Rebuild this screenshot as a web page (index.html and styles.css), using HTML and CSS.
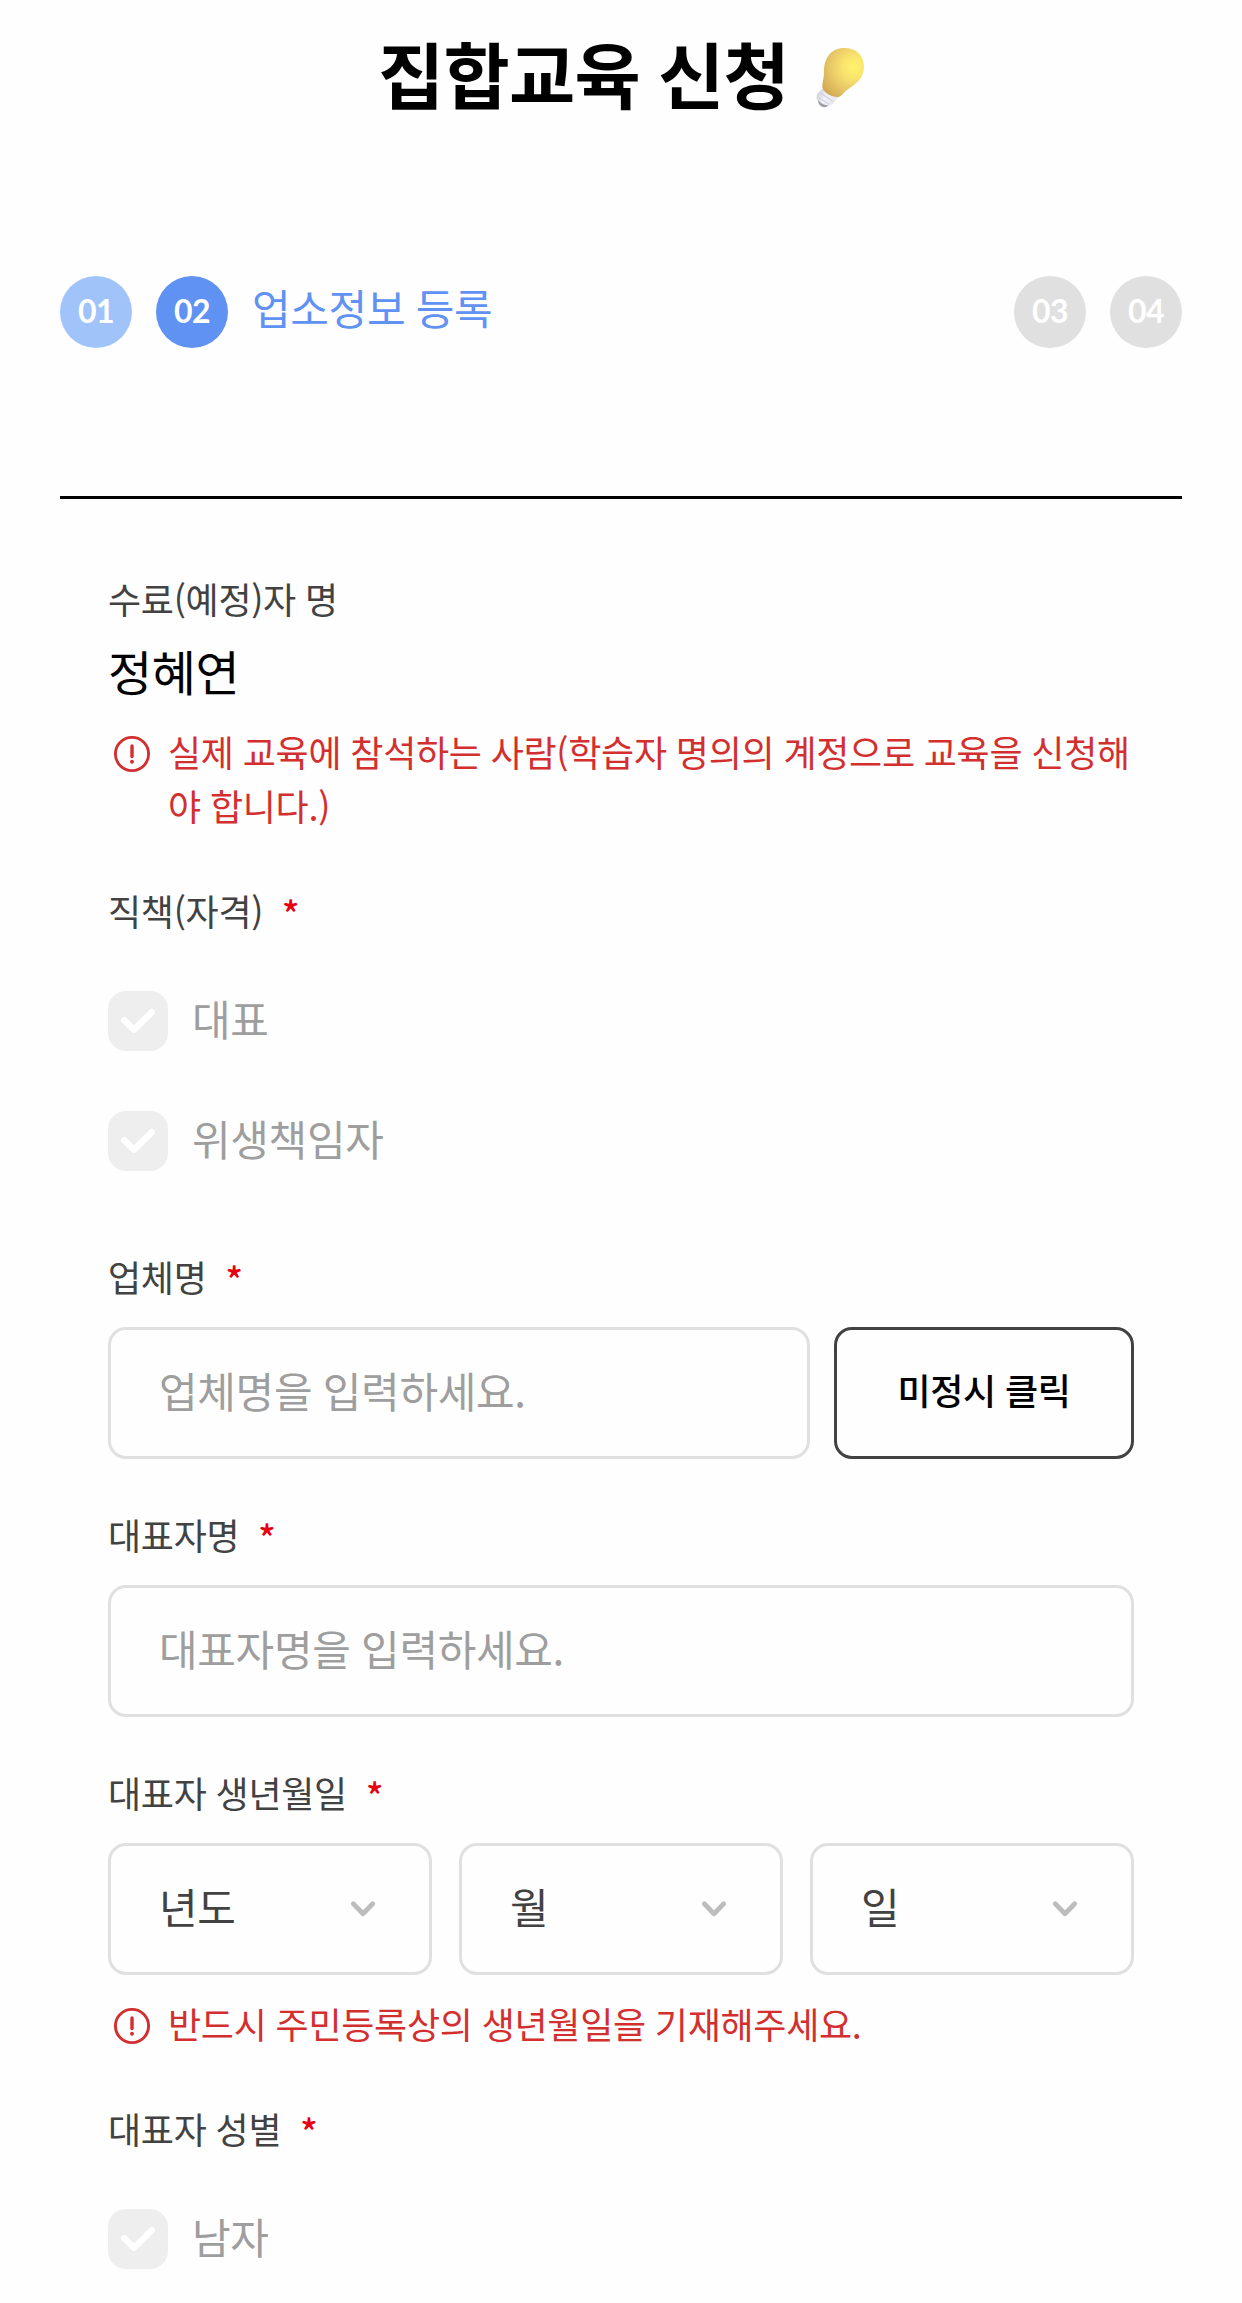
FILE: index.html
```html
<!DOCTYPE html>
<html lang="ko">
<head>
<meta charset="utf-8">
<title>집합교육 신청</title>
<link rel="stylesheet" href="styles.css">
</head>
<body>
<svg class="defs" aria-hidden="true">
  <symbol id="check" viewBox="0 0 60 60"><path d="M16.2 29.2 26 38.8 43.8 21.2" fill="none" stroke="#fff" stroke-width="6.4" stroke-linecap="round" stroke-linejoin="round"/></symbol>
  <symbol id="chevron" viewBox="0 0 36 36"><path d="m8.3 12.8 9.7 9.9 9.7-9.9" fill="none" stroke="#bdbdbd" stroke-width="4.8" stroke-linecap="round" stroke-linejoin="round"/></symbol>
  <symbol id="alert" viewBox="0 0 48 48"><circle cx="24" cy="24" r="16.6" fill="none" stroke="#d32f2f" stroke-width="2.9"/><path d="M24 16v10.6" stroke="#d32f2f" stroke-width="3.4" stroke-linecap="round"/><circle cx="24" cy="31.8" r="2" fill="#d32f2f"/></symbol>
</svg>
<main class="page">
  <header class="title">
    <h1>집합교육 신청</h1>
    <svg class="bulb" viewBox="0 0 48 60">
      <defs>
        <radialGradient id="glass" cx="38" cy="19" r="38" gradientUnits="userSpaceOnUse">
          <stop offset="0" stop-color="#fff36b"/><stop offset=".3" stop-color="#fae36e"/><stop offset=".65" stop-color="#e6c666"/><stop offset="1" stop-color="#cfa850"/>
        </radialGradient>
        <linearGradient id="base" x1="1" y1="46" x2="20" y2="56" gradientUnits="userSpaceOnUse">
          <stop offset="0" stop-color="#d0d0da"/><stop offset=".4" stop-color="#f0f0f8"/><stop offset="1" stop-color="#e6e6f0"/>
        </linearGradient>
      </defs>
      <path d="M7 40 22 49 17 56Q12 60 8 58L1 52Q-.5 49 2 45z" fill="url(#base)"/>
      <path d="M2 52c0 4 3 8 8 7l2.500-1.500Q6 57 2 52z" fill="#9c9ca2"/>
      <path d="m4.500 45 12.500 8.500M2 49l11 7.500" fill="none" stroke="#d3d3de" stroke-width="1.200"/>
      <path d="M28 0C41 0 48 8 48 19 48 31 38 37 31 42 27 45 25 50 20 49 14 48 9 45 7 41 5 37 8 32 8 24 8 10 15 0 28 0Z" fill="url(#glass)"/>
    </svg>
  </header>

  <nav class="steps">
    <span class="step done">01</span>
    <span class="step current">02</span>
    <strong class="step-name">업소정보 등록</strong>
    <span class="step">03</span>
    <span class="step">04</span>
  </nav>

  <form class="form">
    <section class="field attendee">
      <div class="label">수료(예정)자 명</div>
      <div class="name">정혜연</div>
      <p class="notice"><svg class="alert"><use href="#alert"/></svg><span>실제 교육에 참석하는 사람(학습자 명의의 계정으로 교육을 신청해야 합니다.)</span></p>
    </section>

    <section class="field role">
      <div class="label">직책(자격)<em>*</em></div>
      <div class="choice"><svg class="box"><use href="#check"/></svg><span>대표</span></div>
      <div class="choice"><svg class="box"><use href="#check"/></svg><span>위생책임자</span></div>
    </section>

    <section class="field company">
      <div class="label">업체명<em>*</em></div>
      <div class="row">
        <div class="input"><span>업체명을 입력하세요.</span></div>
        <button class="undecided" type="button">미정시 클릭</button>
      </div>
    </section>

    <section class="field">
      <div class="label">대표자명<em>*</em></div>
      <div class="row"><div class="input"><span>대표자명을 입력하세요.</span></div></div>
    </section>

    <section class="field birth">
      <div class="label">대표자 생년월일<em>*</em></div>
      <div class="row dates">
        <div class="input select"><span>년도</span><svg class="chevron"><use href="#chevron"/></svg></div>
        <div class="input select"><span>월</span><svg class="chevron"><use href="#chevron"/></svg></div>
        <div class="input select"><span>일</span><svg class="chevron"><use href="#chevron"/></svg></div>
      </div>
      <p class="notice below"><svg class="alert"><use href="#alert"/></svg><span>반드시 주민등록상의 생년월일을 기재해주세요.</span></p>
    </section>

    <section class="field gender">
      <div class="label">대표자 성별<em>*</em></div>
      <div class="choice"><svg class="box"><use href="#check"/></svg><span>남자</span></div>
    </section>
  </form>
</main>
</body>
</html>
```
FILE: styles.css
```css
* { box-sizing: border-box; margin: 0; padding: 0; letter-spacing: -0.008em; word-spacing: -0.02em; }

body {
  background: #fefefe;
  color: #000;
  font-family: "Noto Sans CJK KR", sans-serif;
  font-size: 36px;
  line-height: 54px;
  overflow-x: hidden;
}

svg { display: block; flex: none; }
.defs { width: 0; height: 0; position: absolute; }
.page { padding: 0 60px; height: 2303px; overflow: hidden; }

.title {
  display: flex;
  justify-content: center;
  padding-top: 20px;
  height: 276px;
}
.title h1 { font-size: 72px; line-height: 104px; font-weight: 700; white-space: nowrap; letter-spacing: -0.01em; }
.bulb { width: 48px; height: 60px; margin: 28px 0 0 27px; }

.steps { display: flex; align-items: center; gap: 24px; height: 72px; }
.step {
  width: 72px;
  height: 72px;
  border-radius: 50%;
  background: #e0e0e0;
  color: #fff;
  font: 700 32px/70px Lato, sans-serif;
  letter-spacing: -0.02em;
  text-align: center;
}
.step.done { background: #a0c4fa; }
.step.current { background: #6092f3; }
.step-name { flex: 1; padding-bottom: 11px; color: #6092f3; font-size: 42px; font-weight: 400; }

.form { margin-top: 148px; border-top: 3px solid #000; padding: 72px 48px 0; }
.field { margin-bottom: 48px; }
.label { color: #424242; height: 54px; margin-bottom: 24px; }
.label em { color: #e60012; font-style: normal; font-weight: 500; line-height: 1; margin-left: 19px; vertical-align: -2px; }

.attendee, .birth { margin-bottom: 51px; }
.attendee .label { margin-bottom: 9px; }
.name { font-size: 48px; line-height: 72px; }
.notice { display: flex; color: #d32f2f; margin-top: 18px; }
.notice.below { margin-top: 21px; }
.alert { width: 48px; height: 48px; margin: 6px 12px 0 0; }

.choice { display: flex; align-items: center; gap: 24px; height: 60px; margin-bottom: 60px; color: #9e9e9e; font-size: 42px; }
.choice span, .input span { padding-bottom: 6px; }
.role .label, .gender .label { margin-bottom: 54px; }
.role { margin-bottom: 78px; }
.box { width: 60px; height: 60px; border-radius: 18px; background: #eee; }

.row { display: flex; gap: 24px; }
.dates { gap: 27px; }
.input {
  flex: 1;
  display: flex;
  align-items: center;
  height: 132px;
  padding: 0 48px;
  border: 3px solid #e0e0e0;
  border-radius: 18px;
  color: #9e9e9e;
  font-size: 42px;
}
.select { justify-content: space-between; color: #424242; }
.chevron { width: 36px; height: 36px; }
.undecided {
  width: 300px;
  height: 132px;
  padding-bottom: 9px;
  border: 3px solid #424242;
  border-radius: 18px;
  background: transparent;
  color: #000;
  font: 500 36px/54px "Noto Sans CJK KR", sans-serif;
}
```
